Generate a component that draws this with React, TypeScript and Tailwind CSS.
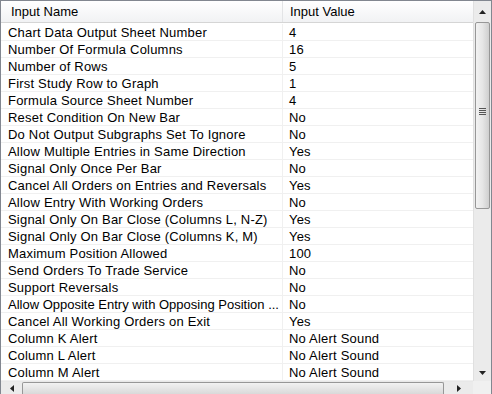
import React from "react";

const rows: [string, string][] = [
  ["Chart Data Output Sheet Number", "4"],
  ["Number Of Formula Columns", "16"],
  ["Number of Rows", "5"],
  ["First Study Row to Graph", "1"],
  ["Formula Source Sheet Number", "4"],
  ["Reset Condition On New Bar", "No"],
  ["Do Not Output Subgraphs Set To Ignore", "No"],
  ["Allow Multiple Entries in Same Direction", "Yes"],
  ["Signal Only Once Per Bar", "No"],
  ["Cancel All Orders on Entries and Reversals", "Yes"],
  ["Allow Entry With Working Orders", "No"],
  ["Signal Only On Bar Close (Columns L, N-Z)", "Yes"],
  ["Signal Only On Bar Close (Columns K, M)", "Yes"],
  ["Maximum Position Allowed", "100"],
  ["Send Orders To Trade Service", "No"],
  ["Support Reversals", "No"],
  ["Allow Opposite Entry with Opposing Position ...", "No"],
  ["Cancel All Working Orders on Exit", "Yes"],
  ["Column K Alert", "No Alert Sound"],
  ["Column L Alert", "No Alert Sound"],
  ["Column M Alert", "No Alert Sound"],
];

// small black scroll arrow glyph
function Arrow({ dir }: { dir: "up" | "down" | "left" | "right" }) {
  const pts = {
    up: "3.5,0 7,4 0,4",
    down: "0,0 7,0 3.5,4",
    left: "4,0 4,7 0,3.5",
    right: "0,0 4,3.5 0,7",
  }[dir];
  const vertical = dir === "up" || dir === "down";
  return (
    <svg
      width={vertical ? 7 : 4}
      height={vertical ? 4 : 7}
      viewBox={vertical ? "0 0 7 4" : "0 0 4 7"}
    >
      <polygon points={pts} fill="#222" />
    </svg>
  );
}

export default function App() {
  return (
    <div
      className="w-[492px] h-[394px] overflow-hidden bg-white border-t border-l border-r border-[#828790] flex flex-col text-[13px] text-black"
      style={{ fontFamily: '"Liberation Sans", Arial, sans-serif' }}
    >
      <div className="flex h-[380px] shrink-0">
        {/* List */}
        <div className="w-[472px] flex flex-col">
          {/* Header */}
          <div className="flex h-[22px] shrink-0 border-b border-[#d5d5d5] bg-gradient-to-b from-white to-[#f1f2f4]">
            <div className="w-[282px] shrink-0 border-r border-[#e3e4e6] pl-[10px] flex items-center leading-none">
              Input Name
            </div>
            <div className="flex-1 pl-[7px] flex items-center leading-none">
              Input Value
            </div>
          </div>
          <div className="h-px shrink-0" />
          {rows.map(([name, value]) => (
            <div
              key={name}
              className="flex h-[17px] shrink-0 border-b border-[#f0f0f0] tracking-[0.2px]"
            >
              <div
                className={`w-[282px] shrink-0 border-r border-[#f0f0f0] pl-[7px] flex items-center whitespace-nowrap overflow-hidden leading-none ${
                  name.endsWith("...") ? "tracking-normal" : ""
                }`}
              >
                {name}
              </div>
              <div className="flex-1 pl-[6px] flex items-center whitespace-nowrap leading-none">
                {value}
              </div>
            </div>
          ))}
        </div>

        {/* Vertical scrollbar */}
        <div className="w-[18px] shrink-0 flex flex-col bg-[#ebebeb] border-l border-[#e0e0e0]">
          <div className="h-[21px] shrink-0 flex items-center justify-center">
            <Arrow dir="up" />
          </div>
          <div className="h-[187px] shrink-0 mx-px rounded-[2px] border border-[#979797] bg-gradient-to-r from-[#f2f2f2] via-[#e6e6e6] to-[#cfcfcf] flex items-center justify-center">
            <div className="flex flex-col gap-[1px] -mt-[8px]">
              <div className="w-[7px] h-px bg-[#555]" />
              <div className="w-[7px] h-px bg-[#555]" />
              <div className="w-[7px] h-px bg-[#555]" />
              <div className="w-[7px] h-px bg-[#555]" />
            </div>
          </div>
          <div className="flex-1" />
          <div className="h-[17px] shrink-0 flex items-center justify-center">
            <Arrow dir="down" />
          </div>
        </div>
      </div>

      {/* Horizontal scrollbar */}
      <div className="flex flex-1">
        <div className="w-[472px] shrink-0 flex bg-[#ebebeb] border-t border-[#e8e8e8]">
          <div className="w-[21px] shrink-0 flex items-center justify-center">
            <Arrow dir="left" />
          </div>
          <div className="w-[422px] shrink-0 rounded-t-[2px] border-t border-l border-r border-[#979797] bg-gradient-to-b from-[#f2f2f2] to-[#d9d9d9]" />
          <div className="flex-1 flex items-center justify-center">
            <Arrow dir="right" />
          </div>
        </div>
        <div className="flex-1 bg-[#f0f0f0]" />
      </div>
    </div>
  );
}
